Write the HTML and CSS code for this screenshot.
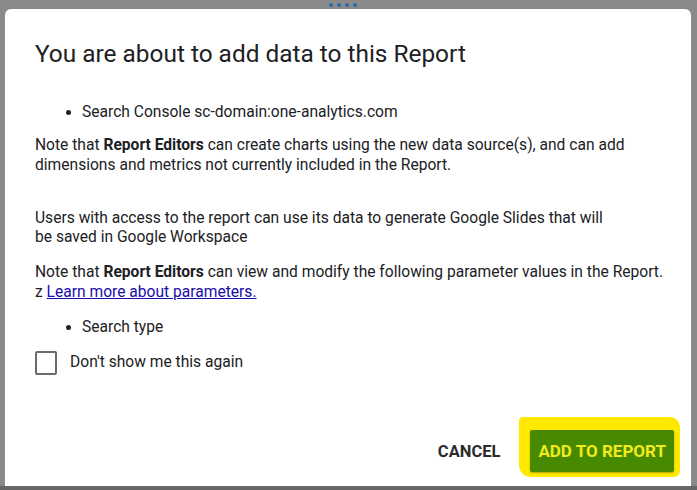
FILE: index.html
```html
<!DOCTYPE html>
<html lang="en-US">

<head>
    <meta charset="UTF-8">
    <meta name="viewport" content="width=device-width, initial-scale=1.0">
    <title>Add data to report</title>
    <link rel="stylesheet" href="styles.css">
</head>

<body>
    <div class="backdrop">
        <div class="drag-handle">
            <span></span><span></span><span></span><span></span>
        </div>
        <div class="dialog">
            <h1>You are about to add data to this Report</h1>
            <div class="dialog-body">
                <ul class="sources">
                    <li>Search Console sc-domain:one-analytics.com</li>
                </ul>
                <p>Note that <b>Report Editors</b> can create charts using the new data source(s), and can add<br>
                    dimensions and metrics not currently included in the Report.</p>
                <p class="slides-note">Users with access to the report can use its data to generate Google Slides that will<br>be saved in Google Workspace</p>
                <p>Note that <b>Report Editors</b> can view and modify the following parameter values in the Report.<br>
                    z <a href="#">Learn more about parameters.</a></p>
                <ul class="params">
                    <li>Search type</li>
                </ul>
                <label class="dont-show">
                    <span class="checkbox"></span>
                    Don't show me this again
                </label>
            </div>
            <div class="actions">
                <button class="btn-cancel">CANCEL</button>
                <div class="highlight">
                    <button class="btn-add">ADD TO REPORT</button>
                </div>
            </div>
        </div>
    </div>
</body>

</html>
```

FILE: styles.css
```css
body {
    margin: 0;
    padding: 0;
    font-family: Roboto, "Liberation Sans", Arial, sans-serif;
    background-color: #676767;
}

.backdrop {
    width: 697px;
    height: 486px;
    background-color: #8a8a8a;
    box-sizing: border-box;
    padding: 0 6px 0 5px;
    overflow: hidden;
}

.drag-handle {
    display: flex;
    justify-content: center;
    gap: 4px;
    height: 9px;
    padding-top: 3px;
    box-sizing: border-box;
    margin-left: -10px;
}

.drag-handle span {
    width: 4px;
    height: 4px;
    border-radius: 50%;
    background-color: #2d6aa8;
}

.dialog {
    background-color: #fff;
    border-radius: 6px 6px 0 0;
    height: 477px;
    box-sizing: border-box;
    padding: 31px 10px 0 30px;
    display: flex;
    flex-direction: column;
    color: #202124;
}

h1 {
    margin: 0;
    font-size: 24.4px;
    font-weight: 400;
    line-height: 28px;
    color: #202124;
}

.dialog-body {
    margin-top: 35px;
    font-size: 15.6px;
    line-height: 19.5px;
    color: #202124;
    white-space: nowrap;
}

.dialog-body p {
    margin: 0 0 15.5px 0;
}

.dialog-body b {
    font-weight: 700;
}

.dialog-body ul {
    margin: 0 0 13.5px 0;
    padding-left: 47px;
}

.dialog-body .slides-note {
    margin-top: 33.5px;
}

.dialog-body a {
    color: #1a0dab;
    text-decoration: underline;
}

.dialog-body .params {
    margin-bottom: 14px;
}

.dont-show {
    display: flex;
    align-items: center;
    gap: 13px;
}

.checkbox {
    width: 18px;
    height: 20px;
    border: 2px solid #6b6b6b;
    border-radius: 2px;
}

.actions {
    margin-top: auto;
    margin-bottom: 9px;
    margin-right: 1px;
    display: flex;
    justify-content: flex-end;
    align-items: flex-end;
    gap: 19px;
}

.actions button {
    font-family: Roboto, "Liberation Sans", Arial, sans-serif;
    font-weight: 700;
    border: none;
    cursor: pointer;
}

.btn-cancel {
    background-color: transparent;
    color: #2b2b2b;
    font-size: 16.5px;
    height: 42px;
    margin-bottom: 5px;
    padding: 0;
}

.highlight {
    background-color: #ffe900;
    padding: 13px 6px 5px 11px;
    border-radius: 4px 10px 6px 12px;
}

.btn-add {
    background-color: #478a00;
    color: #f0ea1e;
    font-size: 17px;
    height: 42px;
    padding: 0 8px;
    border-radius: 2px;
    box-shadow: 0 1px 2px rgba(0, 0, 0, 0.3);
}
```
